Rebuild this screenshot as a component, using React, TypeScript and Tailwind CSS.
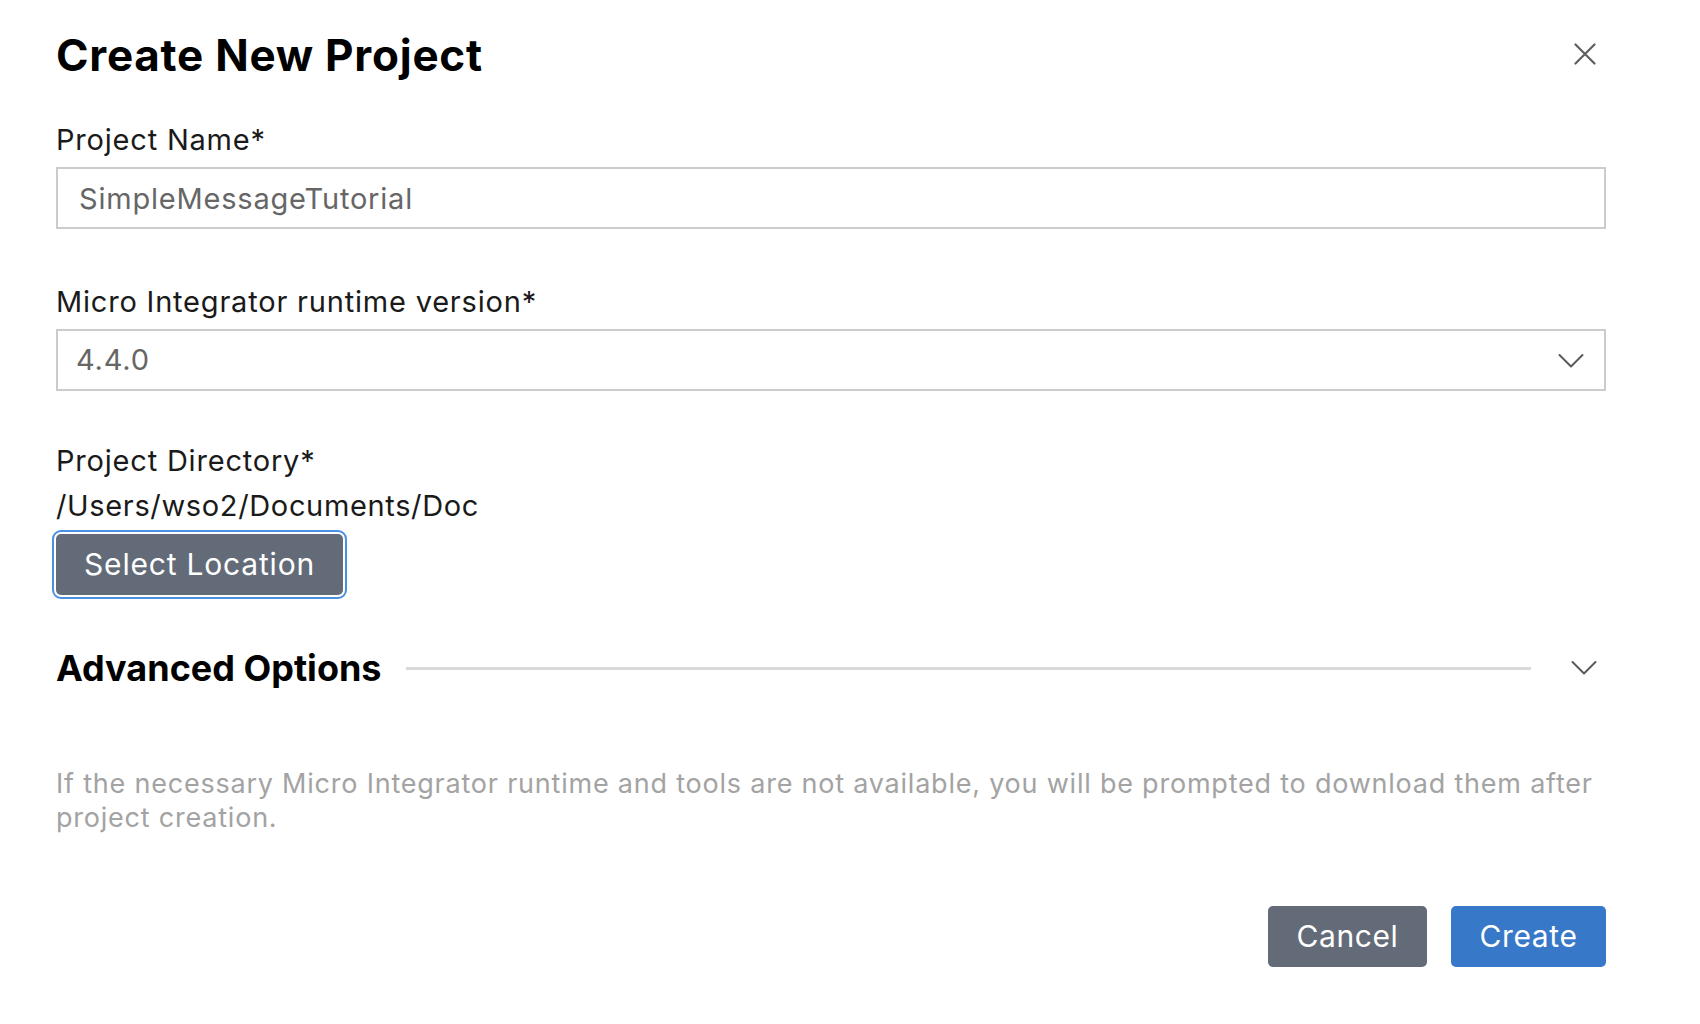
import { useState } from 'react';

const font = { fontFamily: 'Inter, "Noto Sans", sans-serif' };

function Chevron() {
  return (
    <svg width="26" height="16" viewBox="0 0 26 16" fill="none" className="shrink-0">
      <path d="M1.5 2 L13 13.5 L24.5 2" stroke="#5a5a5a" strokeWidth="2" strokeLinecap="round" strokeLinejoin="round" />
    </svg>
  );
}

export default function App() {
  const [name, setName] = useState('SimpleMessageTutorial');
  const [version, setVersion] = useState('4.4.0');

  return (
    <div className="min-h-screen bg-white text-[#1a1a1a]" style={font}>
      <div className="w-[1550px] ml-[56px] pt-[30px]">
        {/* Header */}
        <div className="flex items-start justify-between">
          <h1 className="text-[44px] leading-[50px] font-bold text-black tracking-[0.75px]">Create New Project</h1>
          <button aria-label="Close" className="mt-[13px] mr-[10px] p-0 text-[#5f5f5f]">
            <svg width="22" height="22" viewBox="0 0 22 22" fill="none">
              <path d="M1.5 1.5 L20.5 20.5 M20.5 1.5 L1.5 20.5" stroke="#5f5f5f" strokeWidth="2.2" strokeLinecap="round" />
            </svg>
          </button>
        </div>

        {/* Project name */}
        <label className="block mt-[43px] text-[29px] leading-[34px] tracking-[0.8px]">Project Name*</label>
        <input
          value={name}
          onChange={(e) => setName(e.target.value)}
          className="mt-[10px] block w-full h-[62px] border-2 border-[#cccccc] px-[21px] text-[29px] tracking-[0.8px] text-[#666666] outline-none"
          style={font}
        />

        {/* Runtime version */}
        <label className="block mt-[56px] text-[29px] leading-[34px] tracking-[0.8px]">Micro Integrator runtime version*</label>
        <div className="relative mt-[10px]">
          <select
            value={version}
            onChange={(e) => setVersion(e.target.value)}
            className="appearance-none block w-full h-[62px] border-2 border-[#cccccc] bg-white px-[18px] text-[29px] tracking-[0.8px] text-[#666666] outline-none"
            style={font}
          >
            <option>4.4.0</option>
            <option>4.3.0</option>
            <option>4.2.0</option>
          </select>
          <div className="pointer-events-none absolute right-[22px] top-[24px]">
            <Chevron />
          </div>
        </div>

        {/* Directory */}
        <div className="mt-[53px] text-[29px] leading-[34px] tracking-[0.8px]">Project Directory*</div>
        <div className="mt-[11px] text-[29px] leading-[34px] tracking-[0.65px]">/Users/wso2/Documents/Doc</div>
        <button className="mt-[11px] h-[61px] w-[287px] rounded-[5px] bg-[#636b79] text-white text-[30px] tracking-[0.8px] outline-2 outline-offset-2 outline-[#4a90e2]">
          Select Location
        </button>

        {/* Advanced options */}
        <div className="mt-[52px] flex items-center">
          <h2 className="text-[36px] leading-[42px] font-bold text-black whitespace-nowrap">Advanced Options</h2>
          <div className="ml-[24px] flex-1 h-[3px] bg-[#d9d9d9]" />
          <div className="ml-[40px] mr-[9px]">
            <Chevron />
          </div>
        </div>

        {/* Help text */}
        <p className="mt-[78px] text-[27px] leading-[34px] text-[#a3a3a3] tracking-[0.78px]">
          If the necessary Micro Integrator runtime and tools are not available, you will be prompted to download them after project creation.
        </p>

        {/* Footer */}
        <div className="mt-[71px] flex justify-end gap-[24px]">
          <button className="h-[61px] w-[159px] rounded-[5px] bg-[#636b79] text-white text-[30px] tracking-[0.6px]">Cancel</button>
          <button className="h-[61px] w-[155px] rounded-[5px] bg-[#3778c8] text-white text-[30px] tracking-[0.6px]">Create</button>
        </div>
      </div>
    </div>
  );
}
